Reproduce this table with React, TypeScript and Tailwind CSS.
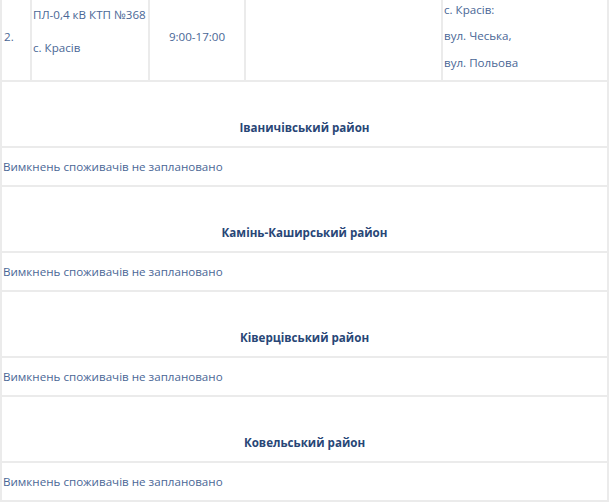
const districts = [
  "Іваничівський район",
  "Камінь-Каширський район",
  "Ківерцівський район",
  "Ковельський район",
];

const cell = "border-2 border-[#ebebeb] align-middle";

export default function App() {
  return (
    <div className="h-[502px] w-[610px] overflow-hidden bg-white font-['Open_Sans',sans-serif] text-[11.6px] text-[#4a6796]">
      <table className="-mt-[9px] w-[609px] table-fixed border-collapse">
        <colgroup>
          <col className="w-[30px]" />
          <col className="w-[118px]" />
          <col className="w-[96px]" />
          <col className="w-[197px]" />
          <col />
        </colgroup>
        <tbody>
          <tr className="h-[89px]">
            <td className={`${cell} pl-[2px]`}>2.</td>
            <td className={`${cell} whitespace-nowrap pl-[1px]`}>
              <p className="mb-[13px] mt-[2px] leading-[20px]">ПЛ-0,4 кВ КТП №368</p>
              <p className="mb-[13px] leading-[20px]">с. Красів</p>
            </td>
            <td className={`${cell} text-center`}>9:00-17:00</td>
            <td className={cell}></td>
            <td className={`${cell} pl-[1px] leading-[26.5px]`}>
              <p>с. Красів:</p>
              <p>вул. Чеська,</p>
              <p>вул. Польова</p>
            </td>
          </tr>
          {districts.map((d) => (
            <DistrictRows key={d} name={d} />
          ))}
        </tbody>
      </table>
    </div>
  );
}

function DistrictRows({ name }: { name: string }) {
  return (
    <>
      <tr className="h-[66px]">
        <td colSpan={5} className={`${cell} pt-[28px] text-center font-bold text-[#284676]`}>
          {name}
        </td>
      </tr>
      <tr className="h-[39px]">
        <td colSpan={5} className={`${cell} pl-[1px]`}>
          Вимкнень споживачів не заплановано
        </td>
      </tr>
    </>
  );
}
